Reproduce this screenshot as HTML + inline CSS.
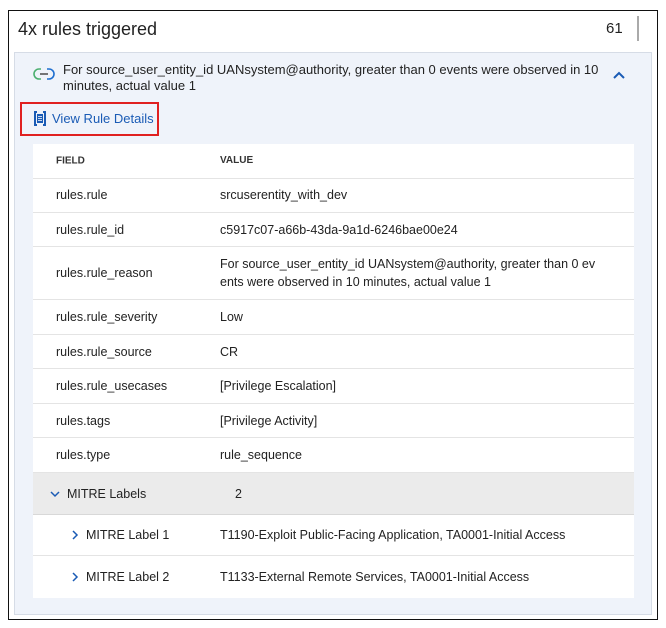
<!DOCTYPE html><html><head><style>
body{margin:0;width:666px;height:628px;background:#fff;font-family:"Liberation Sans",sans-serif;color:#222;position:relative;overflow:hidden}
.a{position:absolute}
.outer{left:8px;top:10px;width:650px;height:610px;border:1px solid #111;box-sizing:border-box}
.panel{left:14px;top:52px;width:638px;height:563px;background:#eff3fa;border:1px solid #d6dce6;box-sizing:border-box}
.tbl{left:33px;top:144px;width:601px;height:454px;background:#fff}
.row{position:absolute;left:0;width:601px;border-bottom:1px solid #e4e4e4;font-size:12.5px}
.row span{position:absolute;top:50%;transform:translateY(-50%)}
.f{left:23px}.v{left:187px;width:395px;line-height:18px}
</style></head><body>
<div class="a outer"></div>
<div class="a" style="left:18px;top:19px;font-size:18px;color:#222">4x rules triggered</div>
<div class="a" style="left:606px;top:20px;font-size:15px">61</div>
<div class="a" style="left:637px;top:16px;width:2px;height:25px;background:#aaa"></div>
<div class="a panel"></div>
<svg class="a" style="left:33px;top:66px" width="22" height="16" viewBox="0 0 22 16"><path d="M8 3H6a5 5 0 0 0 0 10h2" stroke="#4caf70" stroke-width="1.6" fill="none"/><path d="M14 3h2a5 5 0 0 1 0 10h-2" stroke="#1f6fd0" stroke-width="1.6" fill="none"/><path d="M7 8h8" stroke="#555" stroke-width="1.6"/></svg>
<div class="a" style="left:63px;top:62px;width:545px;font-size:13px;line-height:16px">For source_user_entity_id UANsystem@authority, greater than 0 events were observed in 10 minutes, actual value 1</div>
<svg class="a" style="left:612px;top:70px" width="14" height="10"><path d="M2 8l5-5 5 5" stroke="#1a5bb5" stroke-width="2" fill="none"/></svg>
<div class="a" style="left:20px;top:102px;width:139px;height:34px;border:2px solid #e02020;box-sizing:border-box"></div>
<svg class="a" style="left:33px;top:110px" width="14" height="17"><path d="M4 2H2v13h2M10 2h2v13h-2" stroke="#1a5bb5" stroke-width="2" fill="none"/><rect x="4" y="4" width="6" height="9" fill="#1a5bb5"/><path d="M5 6.5h4M5 8.5h4M5 10.5h4" stroke="#fff" stroke-width=".8"/></svg>
<div class="a" style="left:52px;top:111px;font-size:13px;color:#1a5bb5">View Rule Details</div>
<div class="a tbl">
<div class="row" style="top:0;height:34px;font-weight:bold;font-size:10px;color:#333"><span class="f">FIELD</span><span class="v">VALUE</span></div>
<div class="row" style="top:34px;height:34px"><span class="f">rules.rule</span><span class="v">srcuserentity_with_dev</span></div>
<div class="row" style="top:69px;height:33px"><span class="f">rules.rule_id</span><span class="v">c5917c07-a66b-43da-9a1d-6246bae00e24</span></div>
<div class="row" style="top:103px;height:52px"><span class="f">rules.rule_reason</span><span class="v">For source_user_entity_id UANsystem@authority, greater than 0 ev<br>ents were observed in 10 minutes, actual value 1</span></div>
<div class="row" style="top:156px;height:34px"><span class="f">rules.rule_severity</span><span class="v">Low</span></div>
<div class="row" style="top:191px;height:33px"><span class="f">rules.rule_source</span><span class="v">CR</span></div>
<div class="row" style="top:225px;height:34px"><span class="f">rules.rule_usecases</span><span class="v">[Privilege Escalation]</span></div>
<div class="row" style="top:260px;height:33px"><span class="f">rules.tags</span><span class="v">[Privilege Activity]</span></div>
<div class="row" style="top:294px;height:34px"><span class="f">rules.type</span><span class="v">rule_sequence</span></div>
<div class="row" style="top:329px;height:41px;background:#ebebeb;border-bottom:1px solid #d8d8d8"><span style="left:17px;height:8px"><svg width="10" height="8" style="display:block"><path d="M1 2l4 4 4-4" stroke="#1a5bb5" stroke-width="1.5" fill="none"/></svg></span><span style="left:34px">MITRE Labels</span><span style="left:202px">2</span></div>
<div class="row" style="top:371px;height:40px"><span style="left:38px;height:10px"><svg width="8" height="10" style="display:block"><path d="M2 1l4 4-4 4" stroke="#1a5bb5" stroke-width="1.5" fill="none"/></svg></span><span style="left:53px">MITRE Label 1</span><span class="v">T1190-Exploit Public-Facing Application, TA0001-Initial Access</span></div>
<div class="row" style="top:412px;height:42px;border:none"><span style="left:38px;height:10px"><svg width="8" height="10" style="display:block"><path d="M2 1l4 4-4 4" stroke="#1a5bb5" stroke-width="1.5" fill="none"/></svg></span><span style="left:53px">MITRE Label 2</span><span class="v">T1133-External Remote Services, TA0001-Initial Access</span></div>
</div>
</body></html>
